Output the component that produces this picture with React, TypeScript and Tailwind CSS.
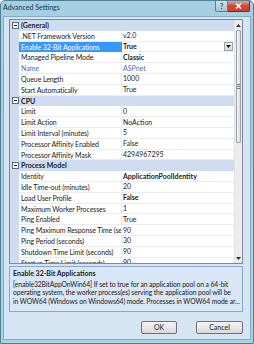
import React from 'react';

type Row =
  | { kind: 'cat'; label: string }
  | { kind: 'prop'; name: string; value: string; bold?: boolean; blue?: boolean; selected?: boolean };

const rows: Row[] = [
  { kind: 'cat', label: '(General)' },
  { kind: 'prop', name: '.NET Framework Version', value: 'v2.0' },
  { kind: 'prop', name: 'Enable 32-Bit Applications', value: 'True', bold: true, selected: true },
  { kind: 'prop', name: 'Managed Pipeline Mode', value: 'Classic', bold: true },
  { kind: 'prop', name: 'Name', value: 'ASPnet', blue: true },
  { kind: 'prop', name: 'Queue Length', value: '1000' },
  { kind: 'prop', name: 'Start Automatically', value: 'True' },
  { kind: 'cat', label: 'CPU' },
  { kind: 'prop', name: 'Limit', value: '0' },
  { kind: 'prop', name: 'Limit Action', value: 'NoAction' },
  { kind: 'prop', name: 'Limit Interval (minutes)', value: '5' },
  { kind: 'prop', name: 'Processor Affinity Enabled', value: 'False' },
  { kind: 'prop', name: 'Processor Affinity Mask', value: '4294967295' },
  { kind: 'cat', label: 'Process Model' },
  { kind: 'prop', name: 'Identity', value: 'ApplicationPoolIdentity', bold: true },
  { kind: 'prop', name: 'Idle Time-out (minutes)', value: '20' },
  { kind: 'prop', name: 'Load User Profile', value: 'False', bold: true },
  { kind: 'prop', name: 'Maximum Worker Processes', value: '1' },
  { kind: 'prop', name: 'Ping Enabled', value: 'True' },
  { kind: 'prop', name: 'Ping Maximum Response Time (seconds)', value: '90' },
  { kind: 'prop', name: 'Ping Period (seconds)', value: '30' },
  { kind: 'prop', name: 'Shutdown Time Limit (seconds)', value: '90' },
  { kind: 'prop', name: 'Startup Time Limit (seconds)', value: '90' },
];

function Expander() {
  return (
    <svg width="7" height="7" viewBox="0 0 7 7" className="shrink-0">
      <rect x="0.5" y="0.5" width="6" height="6" fill="#fff" stroke="#5b6b7e" />
      <path d="M2 3.5h3" stroke="#1a1a1a" />
    </svg>
  );
}

function GridRow({ row }: { row: Row }) {
  if (row.kind === 'cat') {
    return (
      <div className="h-[10.8px] flex items-center bg-[#cfdcef] shrink-0">
        <div className="w-[9px] flex justify-center pl-[1px]">
          <Expander />
        </div>
        <span className="pl-[2px] font-bold">{row.label}</span>
      </div>
    );
  }
  return (
    <div className="h-[10.8px] flex shrink-0">
      <div className="w-[9px] bg-[#cfdcef] shrink-0" />
      <div
        className={`w-[103px] shrink-0 pl-[2px] whitespace-nowrap overflow-hidden border-b border-r tracking-[-0.1px] ${
          row.selected ? 'bg-[#3399ff] text-white border-[#3399ff]' : 'border-[#ececec]'
        } ${row.blue ? 'text-[#3a6fc6]' : ''}`}
      >
        {row.name}
      </div>
      <div
        className={`flex-1 flex items-center pl-[1px] border-b border-[#ececec] whitespace-nowrap overflow-hidden ${
          row.bold ? 'font-bold' : ''
        } ${row.blue ? 'text-[#3a6fc6]' : ''}`}
      >
        <span className="flex-1">{row.value}</span>
        {row.selected && (
          <div className="w-[9px] h-[9px] mr-[1px] border border-[#a0a0a0] bg-gradient-to-b from-[#f4f4f4] to-[#d8d8d8] flex items-center justify-center">
            <svg width="5" height="3" viewBox="0 0 5 3">
              <path d="M0 0h5L2.5 3z" fill="#111" />
            </svg>
          </div>
        )}
      </div>
    </div>
  );
}

function ScrollBar() {
  return (
    <div className="w-[8px] shrink-0 bg-[#ececec] border-l border-[#e2e2e2] flex flex-col">
      <div className="h-[10px] flex items-center justify-center">
        <svg width="5" height="3" viewBox="0 0 5 3">
          <path d="M0 3h5L2.5 0z" fill="#333" />
        </svg>
      </div>
      <div className="h-[113px] mx-[1px] rounded-[1px] border border-[#9da3ab] bg-gradient-to-r from-[#f7f7f7] to-[#dcdcdc] flex items-center justify-center">
        <div className="flex flex-col gap-[1px]">
          <div className="w-[3px] h-px bg-[#777]" />
          <div className="w-[3px] h-px bg-[#777]" />
          <div className="w-[3px] h-px bg-[#777]" />
        </div>
      </div>
      <div className="flex-1" />
      <div className="h-[10px] flex items-center justify-center">
        <svg width="5" height="3" viewBox="0 0 5 3">
          <path d="M0 0h5L2.5 3z" fill="#333" />
        </svg>
      </div>
    </div>
  );
}

export default function App() {
  return (
    <div
      className="w-[254px] h-[344px] flex flex-col bg-gradient-to-b from-[#a5cfe2] to-[#a9d3df] border border-[#4f7f94] rounded-t-[5px] overflow-hidden text-[#1b1b1b]"
      style={{ fontFamily: 'Lato, "Noto Sans", sans-serif' }}
    >
      {/* title bar */}
      <div className="h-[15px] flex items-start shrink-0">
        <span className="pl-[2px] pt-[2px] text-[7px] leading-[9px] text-[#1d3440]">Advanced Settings</span>
        <div className="ml-auto mr-[3px] flex">
          <div className="w-[13px] h-[11px] rounded-bl-[2px] border border-t-0 border-[#5a7f90] bg-gradient-to-b from-[#d3e3ea] to-[#a7c3cf] text-[7px] leading-[10px] text-center font-bold text-[#334]">
            ?
          </div>
          <div className="w-[22px] h-[11px] rounded-br-[2px] border border-l-0 border-t-0 border-[#6a2a22] bg-gradient-to-b from-[#e8a49a] via-[#c9483a] to-[#d0402e] flex items-center justify-center">
            <svg width="7" height="6" viewBox="0 0 7 6">
              <path d="M1 0.5l5 5M6 0.5l-5 5" stroke="#fff" strokeWidth="1.6" />
            </svg>
          </div>
        </div>
      </div>

      {/* client area */}
      <div className="flex-1 mx-[2px] mb-[3px] bg-[#d6e5f4] border border-[#87abc0] pl-[5px] pt-[2px] flex flex-col">
        <div className="w-[234px] h-[245px] border border-[#828790] bg-white flex overflow-hidden text-[7px] leading-[10.8px]">
          <div className="flex-1 flex flex-col overflow-hidden">
            {rows.map((r, i) => (
              <GridRow key={i} row={r} />
            ))}
          </div>
          <ScrollBar />
        </div>

        <div className="w-[234px] h-[46px] mt-[2px] border border-[#8ba9cf] bg-[#d9e6f5] px-[3px] pt-[2px] text-[6.8px] leading-[8.5px] tracking-[-0.1px] overflow-hidden whitespace-nowrap">
          <div className="font-bold text-[7px] tracking-normal">Enable 32-Bit Applications</div>
          <div className="mt-[2px]">[enable32BitAppOnWin64] If set to true for an application pool on a 64-bit</div>
          <div>operating system, the worker process(es) serving the application pool will be</div>
          <div>in WOW64 (Windows on Windows64) mode. Processes in WOW64 mode ar...</div>
        </div>

        <div className="w-[234px] flex justify-end gap-[19px] mt-[9px]">
          <button className="w-[36px] h-[13px] rounded-[2px] border border-[#707070] bg-gradient-to-b from-[#f4f4f4] to-[#dadada] text-[7px] leading-[11px] text-[#1b1b1b]">
            OK
          </button>
          <button className="w-[47px] h-[13px] rounded-[2px] border border-[#707070] bg-gradient-to-b from-[#f4f4f4] to-[#dadada] text-[7px] leading-[11px] text-[#1b1b1b]">
            Cancel
          </button>
        </div>
      </div>
    </div>
  );
}
